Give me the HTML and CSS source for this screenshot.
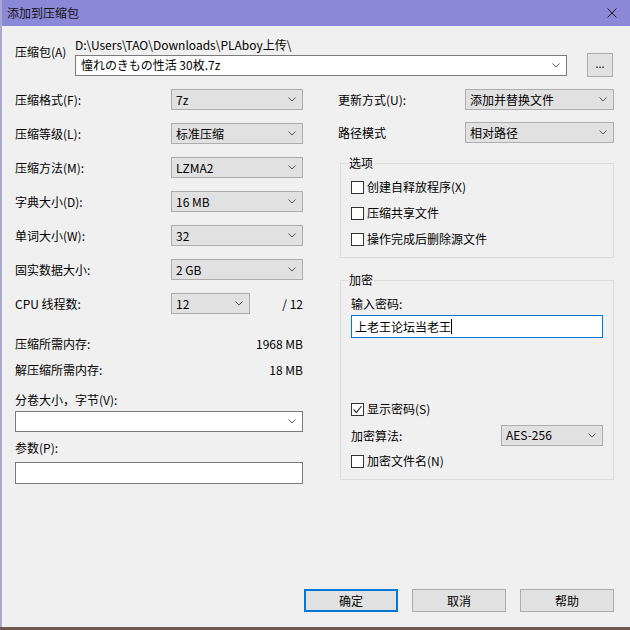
FILE: index.html
```html
<!DOCTYPE html>
<html lang="zh-CN">
<head>
    <meta charset="UTF-8">
    <title>添加到压缩包</title>
    <link rel="stylesheet" href="styles.css">
</head>
<body>

<div class="window">
    <div class="titlebar">
        <span class="title">添加到压缩包</span>
        <svg class="close" width="10" height="10" viewBox="0 0 10 10"><path d="M0.5 0.5 L9.5 9.5 M9.5 0.5 L0.5 9.5"/></svg>
    </div>

    <div class="content">
        <div class="archive">
            <div class="archive-label">压缩包(A)</div>
            <div class="archive-fields">
                <div class="path">D:\Users\TAO\Downloads\PLAboy上传\</div>
                <div class="archive-row">
                    <div class="combo white archive-name">
                        <span>憧れのきもの性活 30枚.7z</span>
                        <svg class="arrow" width="8" height="5" viewBox="0 0 8 5"><path d="M0.5 0.5 L4 4 L7.5 0.5"/></svg>
                    </div>
                    <button class="btn browse">...</button>
                </div>
            </div>
        </div>

        <div class="columns">
            <div class="left">
                <div class="row">
                    <span class="label">压缩格式(F):</span>
                    <div class="combo"><span>7z</span><svg class="arrow" width="8" height="5" viewBox="0 0 8 5"><path d="M0.5 0.5 L4 4 L7.5 0.5"/></svg></div>
                </div>
                <div class="row">
                    <span class="label">压缩等级(L):</span>
                    <div class="combo"><span>标准压缩</span><svg class="arrow" width="8" height="5" viewBox="0 0 8 5"><path d="M0.5 0.5 L4 4 L7.5 0.5"/></svg></div>
                </div>
                <div class="row">
                    <span class="label">压缩方法(M):</span>
                    <div class="combo"><span>LZMA2</span><svg class="arrow" width="8" height="5" viewBox="0 0 8 5"><path d="M0.5 0.5 L4 4 L7.5 0.5"/></svg></div>
                </div>
                <div class="row">
                    <span class="label">字典大小(D):</span>
                    <div class="combo"><span>16 MB</span><svg class="arrow" width="8" height="5" viewBox="0 0 8 5"><path d="M0.5 0.5 L4 4 L7.5 0.5"/></svg></div>
                </div>
                <div class="row">
                    <span class="label">单词大小(W):</span>
                    <div class="combo"><span>32</span><svg class="arrow" width="8" height="5" viewBox="0 0 8 5"><path d="M0.5 0.5 L4 4 L7.5 0.5"/></svg></div>
                </div>
                <div class="row">
                    <span class="label">固实数据大小:</span>
                    <div class="combo"><span>2 GB</span><svg class="arrow" width="8" height="5" viewBox="0 0 8 5"><path d="M0.5 0.5 L4 4 L7.5 0.5"/></svg></div>
                </div>
                <div class="row">
                    <span class="label">CPU 线程数:</span>
                    <div class="combo small"><span>12</span><svg class="arrow" width="8" height="5" viewBox="0 0 8 5"><path d="M0.5 0.5 L4 4 L7.5 0.5"/></svg></div>
                    <span class="threads">/ 12</span>
                </div>

                <div class="mem first">
                    <span>压缩所需内存:</span>
                    <span>1968 MB</span>
                </div>
                <div class="mem">
                    <span>解压缩所需内存:</span>
                    <span>18 MB</span>
                </div>

                <div class="field-label volume">分卷大小，字节(V):</div>
                <div class="combo white full"><span></span><svg class="arrow" width="8" height="5" viewBox="0 0 8 5"><path d="M0.5 0.5 L4 4 L7.5 0.5"/></svg></div>
                <div class="field-label params">参数(P):</div>
                <div class="textbox"></div>
            </div>

            <div class="right">
                <div class="row">
                    <span class="label">更新方式(U):</span>
                    <div class="combo"><span>添加并替换文件</span><svg class="arrow" width="8" height="5" viewBox="0 0 8 5"><path d="M0.5 0.5 L4 4 L7.5 0.5"/></svg></div>
                </div>
                <div class="row">
                    <span class="label">路径模式</span>
                    <div class="combo"><span>相对路径</span><svg class="arrow" width="8" height="5" viewBox="0 0 8 5"><path d="M0.5 0.5 L4 4 L7.5 0.5"/></svg></div>
                </div>

                <div class="group options">
                    <span class="group-title">选项</span>
                    <div class="check first"><span class="box"></span>创建自释放程序(X)</div>
                    <div class="check"><span class="box"></span>压缩共享文件</div>
                    <div class="check"><span class="box"></span>操作完成后删除源文件</div>
                </div>

                <div class="group encrypt">
                    <span class="group-title">加密</span>
                    <div class="field-label pw-label">输入密码:</div>
                    <div class="password">上老王论坛当老王<span class="caret"></span></div>
                    <div class="check show-pw">
                        <span class="box checked"><svg width="11" height="11" viewBox="0 0 11 11"><path d="M1.5 5.5 L4.5 8.5 L9.5 2"/></svg></span>显示密码(S)
                    </div>
                    <div class="algo">
                        <span>加密算法:</span>
                        <div class="combo"><span>AES-256</span><svg class="arrow" width="8" height="5" viewBox="0 0 8 5"><path d="M0.5 0.5 L4 4 L7.5 0.5"/></svg></div>
                    </div>
                    <div class="check"><span class="box"></span>加密文件名(N)</div>
                </div>
            </div>
        </div>

        <div class="buttons">
            <button class="btn default">确定</button>
            <button class="btn">取消</button>
            <button class="btn">帮助</button>
        </div>
    </div>
</div>

</body>
</html>
```

FILE: styles.css
```css
* {
    box-sizing: border-box;
}
body {
    margin: 0;
    width: 630px;
    height: 630px;
    overflow: hidden;
    background-color: #6e5a52;
    font-family: "Noto Sans CJK SC", "Noto Sans", sans-serif;
    font-size: 12px;
    color: #000;
}
.window {
    width: 630px;
    height: 627px;
    background-color: #f0f0f0;
    border-left: 2px solid #aba8d0;
    display: flex;
    flex-direction: column;
}
.titlebar {
    height: 26px;
    background-color: #8b88d7;
    display: flex;
    align-items: center;
    justify-content: space-between;
    padding: 0 13px 0 5px;
}
.title {
    line-height: 16px;
    color: #111;
}
.close path {
    stroke: #1a1a1a;
    stroke-width: 1;
    fill: none;
}
.content {
    flex: 1;
    display: flex;
    flex-direction: column;
    padding: 11px 16px 15px 13px;
}

/* buttons */
.btn {
    height: 23px;
    width: 94px;
    background-color: #e1e1e1;
    border: 1px solid #adadad;
    font-family: inherit;
    font-size: 12px;
    color: #000;
    padding: 0;
}
.buttons {
    margin-top: auto;
    display: flex;
    justify-content: flex-end;
    gap: 14px;
}
.btn.default {
    border-color: #0078d7;
    box-shadow: inset 0 0 0 1px #0078d7;
}

/* combos and inputs */
.combo {
    height: 21px;
    width: 132px;
    flex-shrink: 0;
    background-color: #e1e1e1;
    border: 1px solid #adadad;
    display: flex;
    align-items: center;
    justify-content: space-between;
    padding: 0 6px 0 4px;
    line-height: 16px;
    white-space: nowrap;
}
.combo.white {
    background-color: #fff;
    border-color: #7a7a7a;
}
.combo.small {
    width: 79px;
}
.combo.full {
    width: 288px;
}
.arrow path {
    stroke: #555;
    stroke-width: 1;
    fill: none;
}
.textbox {
    width: 288px;
    height: 22px;
    margin-top: 6px;
    background-color: #fff;
    border: 1px solid #7a7a7a;
}

/* archive name */
.archive {
    display: flex;
}
.archive-label {
    width: 60px;
    flex-shrink: 0;
    margin-top: 7px;
    line-height: 16px;
}
.archive-fields {
    flex: 1;
}
.path {
    line-height: 16px;
}
.archive-row {
    display: flex;
    align-items: center;
}
.combo.archive-name {
    width: 492px;
    padding-left: 5px;
}
.btn.browse {
    width: 26px;
    height: 24px;
    margin-left: 20px;
    padding: 0 0 4px;
    font-size: 11px;
    line-height: 16px;
}

/* columns */
.columns {
    display: flex;
    margin-top: 12px;
}
.left {
    width: 288px;
    display: flex;
    flex-direction: column;
}
.right {
    width: 276px;
    margin-left: 35px;
    display: flex;
    flex-direction: column;
}
.row {
    height: 21px;
    display: flex;
    align-items: center;
    margin-bottom: 13px;
}
.left .label {
    width: 156px;
}
.right .label {
    width: 127px;
}
.right .row {
    margin-bottom: 12px;
}
.right .combo {
    width: 149px;
}
.threads {
    margin-left: auto;
}
.mem {
    height: 26px;
    display: flex;
    align-items: center;
    justify-content: space-between;
}
.mem.first {
    margin-top: 3px;
}
.field-label {
    line-height: 16px;
}
.volume {
    margin-top: 10px;
    margin-bottom: 3px;
}
.params {
    margin-top: 8px;
}

/* groups */
.group {
    margin-left: 2px;
    border: 1px solid #dcdcdc;
    padding: 0 10px 5px 10px;
    display: flex;
    flex-direction: column;
}
.group-title {
    align-self: flex-start;
    margin: -9px 0 0 -3px;
    padding: 0 1px;
    line-height: 16px;
    background-color: #f0f0f0;
}
.options {
    margin-top: 8px;
}
.encrypt {
    margin-top: 22px;
}
.check {
    height: 26px;
    display: flex;
    align-items: center;
    line-height: 16px;
}
.check.first {
    margin-top: 3px;
}
.box {
    width: 13px;
    height: 13px;
    border: 1px solid #333;
    background-color: #fff;
    margin-right: 3px;
    display: flex;
    align-items: center;
    justify-content: center;
}
.box svg path {
    stroke: #333;
    stroke-width: 1.2;
    fill: none;
}
.pw-label {
    margin-top: 8px;
}
.password {
    height: 23px;
    width: 252px;
    margin-top: 3px;
    border: 1px solid #0078d7;
    background-color: #fff;
    padding: 0 3px;
    display: flex;
    align-items: center;
    line-height: 16px;
}
.caret {
    width: 1px;
    height: 15px;
    background-color: #000;
}
.show-pw {
    margin-top: 58px;
}
.algo {
    height: 26px;
    display: flex;
    align-items: center;
    justify-content: space-between;
}
.algo .combo {
    width: 102px;
}
```
